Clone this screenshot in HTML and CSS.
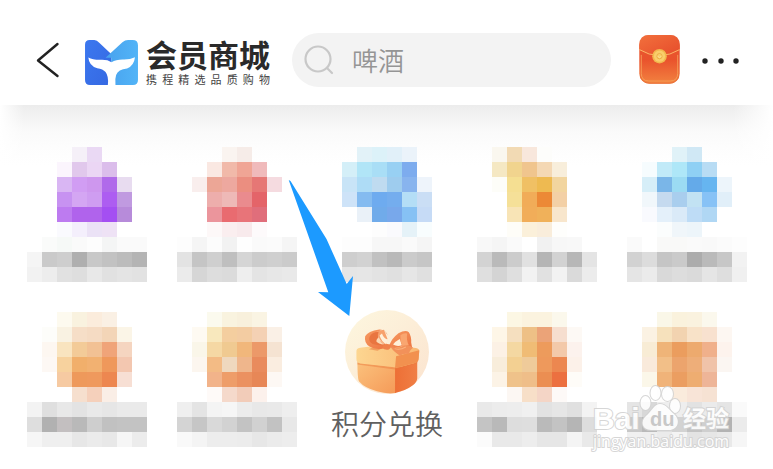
FILE: index.html
```html
<!DOCTYPE html>
<html lang="zh-CN">
<head>
    <meta charset="UTF-8">
    <meta name="viewport" content="width=device-width, initial-scale=1.0">
    <title>会员商城</title>
    <link rel="stylesheet" href="styles.css">
</head>
<body>

    <!-- Top bar -->
    <header class="topbar">
        <button class="icon-button back" type="button" aria-label="返回">
            <svg width="24" height="36" viewBox="0 0 24 36" fill="none" stroke="#222" stroke-width="2.4" stroke-linecap="round" stroke-linejoin="round"><path d="M21.500 2 2 18.500 21.500 34"/></svg>
        </button>

        <a class="brand" href="#">
            <svg width="53" height="45" viewBox="196 59 160 136" aria-hidden="true">
                <defs>
                    <linearGradient id="whaleLeft" x1="0" y1="0" x2="1" y2="1">
                        <stop offset="0" stop-color="#3c78ef"/>
                        <stop offset="1" stop-color="#3568e2"/>
                    </linearGradient>
                    <linearGradient id="whaleRight" x1="0" y1="0" x2="1" y2="0">
                        <stop offset="0" stop-color="#48a2ee"/>
                        <stop offset="1" stop-color="#52b4f7"/>
                    </linearGradient>
                </defs>
                <path fill="url(#whaleLeft)" d="M196 73Q196 59 210 59H224Q232 59 239 67L275 101V195H211Q196 195 196 180Z"/>
                <path fill="url(#whaleRight)" d="M258 113 309 66Q317 59 326 59H340Q356 59 356 75V180Q356 195 341 195H275V113Z"/>
                <path fill="#fff" d="M206 112Q219 119 240 119Q263 117 276 126Q291 117 314 118Q333 118 347 111Q344 137 323 145Q296 147 290 165Q286 176 288 195H265Q268 169 258 156Q250 146 233 144Q208 138 206 112Z"/>
            </svg>
            <span class="brand-text">
                <strong>会员商城</strong>
                <small>携程精选品质购物</small>
            </span>
        </a>

        <form class="search" role="search">
            <label for="keyword" aria-label="搜索">
                <svg width="32" height="32" viewBox="0 0 32 32" fill="none" stroke="#c8c8c8" stroke-width="2.200" stroke-linecap="round"><circle cx="14" cy="15" r="12.500"/><path d="m23 24 5 5"/></svg>
            </label>
            <input id="keyword" type="text" placeholder="啤酒">
        </form>

        <button class="icon-button packet" type="button" aria-label="红包">
            <svg width="41" height="49" viewBox="59 42 122 148">
                <defs>
                    <linearGradient id="packetFill" x1="0" y1="0" x2="0" y2="1">
                        <stop offset="0" stop-color="#e95a30"/>
                        <stop offset=".5" stop-color="#e9522c"/>
                        <stop offset="1" stop-color="#f28240"/>
                    </linearGradient>
                    <linearGradient id="packetFlap" x1="0" y1="0" x2="1" y2="1">
                        <stop offset="0" stop-color="#f2703c"/>
                        <stop offset="1" stop-color="#e64c2b"/>
                    </linearGradient>
                </defs>
                <rect x="59" y="42" width="122" height="147" rx="30" fill="url(#packetFill)"/>
                <path d="M59 86V72Q59 42 89 42H151Q181 42 181 72V86Q150 104 120 104T59 86Z" fill="url(#packetFlap)"/>
                <path d="M59 86Q88 104 120 104T181 86" fill="none" stroke="#fbb568" stroke-width="3"/>
                <path d="M65 102V158Q65 181 88 181H152Q175 181 175 158V102" fill="none" stroke="#f6a45b" stroke-width="2.500"/>
                <path d="M62 165Q66 187 90 188H150Q174 187 178 165" fill="none" stroke="#e66b35" stroke-width="2"/>
                <circle cx="120" cy="106" r="22" fill="#f2b84e"/>
                <circle cx="120" cy="106" r="17" fill="#f9ce6b"/>
                <circle cx="120" cy="106" r="8" fill="none" stroke="#edae48" stroke-width="3"/>
                <path d="m114 105 6 6 6-6" fill="none" stroke="#fbe094" stroke-width="3"/>
            </svg>
        </button>

        <button class="icon-button more" type="button" aria-label="更多">
            <svg width="38" height="8" viewBox="0 0 38 8" fill="#222"><circle cx="3" cy="5" r="2.700"/><circle cx="19" cy="5" r="2.700"/><circle cx="34" cy="5" r="2.700"/></svg>
        </button>
    </header>

    <!-- Category grid, the mosaic tiles are filled in by tiles.js -->
    <main class="content">
        <ul class="tiles">
            <li><svg class="mosaic" viewBox="0 0 8 9"></svg></li>
            <li><svg class="mosaic" viewBox="0 0 8 9"></svg></li>
            <li><svg class="mosaic" viewBox="0 0 8 9"></svg></li>
            <li><svg class="mosaic" viewBox="0 0 8 9"></svg></li>
            <li><svg class="mosaic" viewBox="0 0 8 9"></svg></li>
            <li><svg class="mosaic" viewBox="0 0 8 9"></svg></li>
            <li><svg class="mosaic" viewBox="0 0 8 9"></svg></li>
            <li>
                <a class="gift" href="#">
                    <svg width="84" height="84" viewBox="76 46 250 250" aria-hidden="true">
                        <defs>
                            <linearGradient id="disc" x1="0" y1="0" x2="1" y2="1">
                                <stop offset="0" stop-color="#fdf7df"/>
                                <stop offset="1" stop-color="#fbe3cf"/>
                            </linearGradient>
                            <linearGradient id="boxFront" x1="0" y1="0" x2="1" y2="1">
                                <stop offset="0" stop-color="#fbc27d"/>
                                <stop offset="1" stop-color="#f59a58"/>
                            </linearGradient>
                            <linearGradient id="boxSide" x1="0" y1="0" x2="1" y2="0">
                                <stop offset="0" stop-color="#ed6f36"/>
                                <stop offset="1" stop-color="#f07f45"/>
                            </linearGradient>
                            <linearGradient id="lid" x1="0" y1="0" x2="1" y2="0">
                                <stop offset="0" stop-color="#fdd691"/>
                                <stop offset="1" stop-color="#f9b873"/>
                            </linearGradient>
                            <linearGradient id="ribbon" x1="0" y1="0" x2="1" y2="1">
                                <stop offset="0" stop-color="#f79a61"/>
                                <stop offset="1" stop-color="#ec7441"/>
                            </linearGradient>
                        </defs>
                        <circle cx="201" cy="171" r="125" fill="url(#disc)"/>
                        <path d="M113 199 228 215V293Q201 297 171 288Q134 278 118 259Q113 252 113 199Z" fill="url(#boxFront)"/>
                        <path d="M225 215 291 198V250Q290 261 278 270Q257 286 225 293Z" fill="url(#boxSide)"/>
                        <path d="M113 202 225 217 291 199V204L225 223 113 208Z" fill="#ec7b3e" opacity=".5"/>
                        <path d="M110 170Q109 160 121 158L181 151Q201 149 222 152L287 159Q298 161 297 170L295 192Q294 200 284 204L240 216Q229 218 218 216L121 205Q110 203 110 192Z" fill="url(#lid)"/>
                        <path d="M228 184 297 166 295 193Q294 201 284 204L240 216Q233 218 225 217Z" fill="#f2914f"/>
                        <path d="m167 154-20 9 26 4 16-9Z" fill="#e98043" opacity=".6"/>
                        <path d="M197 149Q182 144 172 126Q165 111 176 109Q188 104 192 106L204 122Q196 103 178 104Q144 109 136 124Q132 143 149 155Q164 164 186 161Q196 160 205 150Z" fill="url(#ribbon)"/>
                        <path d="M170 109 192 105 202 131 200 150Q178 144 170 109Z" fill="#f7a16c"/>
                        <path d="M176 111Q155 113 149 126Q145 139 158 147Q171 151 195 151Q180 142 176 130Q172 119 176 111Z" fill="#e97540"/>
                        <path d="M186 116Q192 133 204 134L199 148Q184 140 179 122Z" fill="#fff0d9"/>
                        <path d="M176 128Q170 131 169 139Q175 147 192 149Q181 142 176 128Z" fill="#fbd9b4"/>
                        <path d="M209 148Q216 130 235 115Q256 104 266 112Q274 124 273 143L276 159Q263 149 250 152Q230 162 212 158Z" fill="url(#ribbon)"/>
                        <path d="M219 149Q225 139 239 132L245 151Q232 156 219 149Z" fill="#fff0d9"/>
                        <path d="M241 121Q251 113 261 116Q258 135 266 151L247 153Q239 137 241 121Z" fill="#f9a670"/>
                        <path d="M211 155Q220 171 240 182Q248 174 266 177Q268 165 279 158Q266 149 251 152Q230 164 211 155Z" fill="#f2915a"/>
                        <path d="M224 161Q240 166 257 156" fill="none" stroke="#fbb27e" stroke-width="3"/>
                        <path d="M190 151Q198 144 212 149Q215 160 205 164Q193 166 187 158Z" fill="#f0824b"/>
                    </svg>
                    <span>积分兑换</span>
                </a>
            </li>
            <li><svg class="mosaic" viewBox="0 0 8 9"></svg></li>
            <li><svg class="mosaic" viewBox="0 0 8 9"></svg></li>
        </ul>

        <!-- Arrow pointing at the gift -->
        <svg class="arrow" width="66" height="137" viewBox="0 0 66 137" aria-hidden="true">
            <path fill="#1c9aff" d="M.7 0 2.500 1 38.500 59 58.700 104 65 96 61.300 136 30 112 40.300 112.300Z"/>
        </svg>

        <!-- Watermark -->
        <svg class="watermark" width="144" height="70" viewBox="0 0 144 70">
            <g class="mark">
                <text x="3" y="46" class="mark-latin">Bai</text>
                <text x="93" y="44" class="mark-cjk">经验</text>
                <text x="3" y="64" class="mark-url">jingyan.baidu.com</text>
                <ellipse cx="55.500" cy="20" rx="5" ry="7"/>
                <ellipse cx="65.500" cy="10" rx="5" ry="7"/>
                <ellipse cx="77.500" cy="11" rx="5.500" ry="7"/>
                <ellipse cx="85" cy="23" rx="5" ry="7"/>
                <path d="M70 21C76 21 79 27 84 31C91 37 88 47 79 47C73 47 67 47 61 47C52 47 50 38 56 33C62 28 64 21 70 21Z"/>
            </g>
            <text x="60" y="43" class="mark-du">du</text>
        </svg>
    </main>

    <script src="tiles.js"></script>
</body>
</html>
```

FILE: styles.css
```css
/* General styles */
* {
    box-sizing: border-box;
}

body {
    margin: 0;
    background-color: #fff;
    font-family: "Noto Sans CJK SC", "Noto Sans", sans-serif;
    color: #222;
}

svg {
    display: block;
}

/* Top bar */
.topbar {
    display: flex;
    align-items: center;
    padding: 14px 33px 0 36px;
    height: 105px;
    background-color: #fff;
}

.icon-button {
    flex: none;
    padding: 0;
    border: none;
    background: none;
    cursor: pointer;
}

.brand {
    display: flex;
    align-items: center;
    gap: 8px;
    margin-left: 25px;
    margin-top: 6px;
    color: #2a2a2a;
    text-decoration: none;
}

.brand-text {
    display: flex;
    flex-direction: column;
    margin-bottom: 4px;
}

.brand-text strong {
    font-size: 31px;
    line-height: 36px;
    font-weight: 700;
}

/* Tagline is spread over the width of the name */
.brand-text small {
    font-size: 11px;
    line-height: 14px;
    color: #444;
    text-align: justify;
    text-align-last: justify;
}

/* Search box */
.search {
    flex: 1;
    display: flex;
    align-items: center;
    gap: 16px;
    min-width: 0;
    height: 54px;
    margin-left: 22px;
    padding: 0 12px;
    border-radius: 27px;
    background-color: #f3f3f3;
}

.search input {
    flex: 1;
    min-width: 0;
    padding: 0;
    border: none;
    outline: none;
    background: none;
    font-family: inherit;
    font-size: 26px;
    font-weight: 350;
    color: #333;
}

.search input::placeholder {
    color: #959595;
}

.packet {
    margin-left: 28px;
}

.more {
    margin-left: 22px;
}

/* Category grid */
.content {
    position: relative;
    padding: 42px 26px 22px 27px;
    background:
        linear-gradient(90deg, #fff, transparent 24px, transparent calc(100% - 40px), #fff),
        linear-gradient(#ececec, #f3f3f3 12px, #fafafa 26px, #fdfdfd 42px, #fff 60px);
}

.tiles {
    display: grid;
    grid-template-columns: repeat(5, 1fr);
    gap: 30px;
    margin: 0;
    padding: 0;
    list-style: none;
}

.mosaic {
    width: 100%;
    shape-rendering: crispEdges;
}

.gift {
    display: flex;
    flex-direction: column;
    align-items: center;
    gap: 8px;
    margin-top: -2px;
    color: #606060;
    text-decoration: none;
    font-size: 28px;
    line-height: 42px;
    font-weight: 350;
}

/* Overlays */
.arrow {
    position: absolute;
    left: 288px;
    top: 75px;
}

.watermark {
    position: absolute;
    right: 39px;
    top: 278px;
}

.mark {
    fill: #fff;
    stroke: #d2d2d2;
    stroke-width: 2px;
    paint-order: stroke;
    opacity: 0.9;
}

.mark-latin,
.mark-du {
    font-family: "Liberation Sans", Arial, sans-serif;
    font-weight: 700;
}

.mark-latin {
    font-size: 30px;
}

.mark-du {
    font-size: 20px;
    fill: #c8c8c8;
}

.mark-cjk {
    font-size: 23px;
    font-weight: 700;
}

.mark-url {
    font-family: "Open Sans", sans-serif;
    font-size: 16px;
    font-weight: 400;
}
```

FILE: tiles.js
```js
// One entry per mosaic tile, one string per row, "." is an empty cell
const tiles = [
    [
        ". . . f5f0f8 ead9f4 . . .",
        ". . fbf5fd e1c8ec ebd6f4 dbbdeb . .",
        ". . d9b6f3 d19df3 ce97ee b06aea e8dcf0 .",
        ". . c792f1 d4a6f3 cf9df1 ad5df1 c09ae0 .",
        ". . bd7bf0 b063ec b063ec a44ff2 b78bda .",
        ". . fafafe f4effc ebe2f6 eee2f5 . .",
        ". fafbfa f6f9f7 fafafa fdfdfd f4f5f5 fafafa fafafa",
        "f5f5f5 cacaca cecece afafaf c8c8c8 c2c2c2 bcbcbc b4b4b4",
        "f2f2f2 ededed e1e1e1 dedede e8e8e8 e1e1e1 e4e4e4 e2e2e2"
    ],
    [
        ". . . faf4f0 f6ece8 . . .",
        ". . fae8e2 f1b9a9 f0a595 f0babb . .",
        ". f9eeed eca696 eda89f eb8e80 e67775 f5dbe0 .",
        ". . edaeac eeb9b7 ea8b8e e46469 . .",
        ". . eb959c e96b70 e87479 e06e7b . .",
        ". . fdf8f8 faeeef f8eaec fdfafb . .",
        "fdfdfd f5f5f5 fcfcfc f2f2f2 fefefe fafafa fbfbfb f5f5f5",
        "e3e3e3 c5c5c5 cfcfcf bfbfbf d5d5d5 cccccc cfcfcf cbcbcb",
        "ebebeb d6d6d6 dddddd dbdbdb eeeeee e4e4e4 e7e7e7 e9e9e9"
    ],
    [
        ". . e2f2f8 dcf2f9 e1f0f9 ebf3fa . .",
        ". d4eff8 b1e5f7 a9def6 98d0f3 7dacee . .",
        ". c8e4f7 aedcf6 bfdbf0 9eccee 88b4ee eef4fb .",
        ". cee3f8 84bbf0 6eabef 74adee b4def6 cadef5 .",
        ". . eaf1f8 70abea 78a8eb 86c1f4 c6dbf6 .",
        ". . . fdfdfd fafafd e5f2f8 f8fdfe .",
        ". fdfdfd fdfdfd f7f7f7 f7f7f7 fafafa f5f5f5 .",
        ". cecece d2d2d2 c1c1c1 b9b9b9 cbcbcb c6c6c6 .",
        ". e5e5e5 e6e6e6 e3e3e3 e0e0e0 e6e6e6 e0e0e0 ."
    ],
    [
        ". faf7ef f2dab4 f8e7dc fdfdfb . . .",
        ". f5e8c3 f1d48e f0c58e f4d8b4 f8eedb . .",
        ". fdfdf8 f5df92 f0c064 eeba51 f2d59f . .",
        ". . f5e098 f1ac58 ec8936 f3d0a6 . .",
        ". . f8e4b6 f1ad59 f0b15a f8e6cc . .",
        ". . fefdf8 fbf0da f9eddb fefefc . .",
        "f8f8f8 f5f5f5 fafafa . f1f1f1 f7f7f7 f8f8f8 .",
        "d3d3d3 bababa cccccc e1e1e1 b5b5b5 d2d2d2 b7b7b7 e4e4e4",
        "dfdfdf d4d4d4 dfdfdf f2f2f2 e1e1e1 f2f2f2 dadada ececec"
    ],
    [
        ". . . e0f2f8 d0e8f5 . . .",
        ". f6fcfe c1eaf8 aee7f8 8fd0f4 b8dcf4 . .",
        ". d6eef8 7ab6e8 9bdbf3 64aae9 66b5f0 edf5fb .",
        ". f1f7fb c5daef a9ceee c2e2f3 87c2f6 e1eff9 .",
        ". f9fafe e4f0fa daeaf8 bedcf6 b0d7f4 . .",
        ". . fbfdfd f0f6fa edf5fa . . .",
        "fafafa . f9f9f8 f9f9f8 fafafa f9f9f9 fbfbfb fdfdfd",
        "d2d2d2 dcdcdc c5c5c5 cacaca acacac bababa c7c7c7 f2f2f2",
        "e5e5e5 ebebeb d9d9d9 dddddd dadada e5e5e5 dedede f0f0f0"
    ],
    [
        ". . fdfaef f9f2df fbecdc faf0e4 . .",
        ". fdfdfa f9f2e2 f6dec7 f5dbc3 f3d5b7 fbf5e7 .",
        ". fdf7f1 f9e4bf f3cb98 f2c194 f0a479 f5d5c0 .",
        ". fdf8f4 f7d29e f1af6b f2b171 ef985b f3c7b0 .",
        ". . f6caa2 ee995b ef995d ed8750 f7dfd4 .",
        ". . . f6dfce f5d0bb faeee6 . .",
        "f3f3f3 dfdfdf e8e8e8 e3e3e3 e9e9e9 e6e6e6 eaeaea eaeaea",
        "dedede b1b1b1 c3bfc0 b9b9b9 cecece c1c1c1 c3c3c3 c3c3c3",
        "f6f6f6 efefef efefef e7e7e7 ebebeb e8e8e8 f6f6f6 ececec"
    ],
    [
        ". . fbfaee f9f3df f8f0dc faf4e3 . .",
        ". fefaf2 f8e8bd f4ce9f f3cca2 f4d1b4 faf0e6 .",
        ". faf6e9 f5d8a4 f0ca91 f1b77b ec9969 f5e3d2 .",
        ". fcf6ef f3bb85 efd8be efb68c e98b5d faede0 .",
        ". . f2b38a ee9d69 eb9160 e78757 fdf8f4 .",
        ". . fefaf8 f5d9cb f2ccb9 fcf1ec . .",
        "efefef e4e4e4 f4f4f4 f6f6f6 ececec e8e8e8 e9e9e9 eeeeee",
        "d4d4d4 c6c6c6 d9d9d9 d2d2d2 c3c3c3 d1d1d1 c2c2c2 e8e8e8",
        "f9f9f9 f4f4f4 ededed ededed ececec e7e7e7 ebebeb ededed"
    ],
    [
        ". . fcf7e4 fbf3df fbf3df fbf8ec . .",
        ". fef6e7 f5dfbf eec086 eba378 f6decf fdf9f5 .",
        ". fcf1e5 f4d8a2 f0bc75 ed9b5c f3c9aa fcf2ed .",
        ". f8eddb f3d092 efcb9a ee995c ec8750 fcf1e9 .",
        ". fcf3e6 efc28a efbe89 eb8e52 ec7040 fefcf8 .",
        ". . fcf7f3 f7dfc8 f4d5c6 fdf9f7 . .",
        "e9e9e9 ececec ededed f0f0f0 e2e2e2 e6e6e6 e0e0e0 f3f3f3",
        "c4c4c4 b9b9b9 dddddd dedede bababa c3c3c3 b5b5b5 dddddd",
        "fbfbfb e9e9e9 e9e9e9 ededed e6e6e6 e6e6e6 f4f4f4 e9e9e9"
    ],
    [
        ". . faf7e8 faf2dd faf2df fbf8ed . .",
        ". fbf2e3 f6e1bc f2d3b0 f8e2c8 f8e1cf fdf7f2 .",
        ". f8ecd5 efb478 eb9d5e edaa6e f0b08b fdf3ed .",
        ". f9eadb f2bf88 eca46d eeae79 f0c3a9 fbf6f2 .",
        ". fbf7e9 f0b379 eb9e61 eead71 eeb598 . .",
        ". . fefdfc faebdc f8e4d7 f6e2d3 . .",
        "e5e5e5 d8d8d8 eeeeee eeeeee e2e2e2 ebebeb e5e5e5 fafafa",
        "c8c8c8 bababa dfdfdf d3d3d3 c3c3c3 cfcfcf b3b3b3 ebebeb",
        "f0f0f0 efefef ebebeb f4f4f4 e3e3e3 e6e6e6 e9e9e9 f6f6f6"
    ]
];

document.querySelectorAll(".mosaic").forEach(function(svg, i) {
    tiles[i].forEach(function(row, y) {
        row.split(" ").forEach(function(color, x) {
            if (color === ".") return;
            const cell = document.createElementNS("http://www.w3.org/2000/svg", "rect");
            cell.setAttribute("x", x);
            cell.setAttribute("y", y);
            cell.setAttribute("width", 1);
            cell.setAttribute("height", 1);
            cell.setAttribute("fill", "#" + color);
            svg.appendChild(cell);
        });
    });
});
```
